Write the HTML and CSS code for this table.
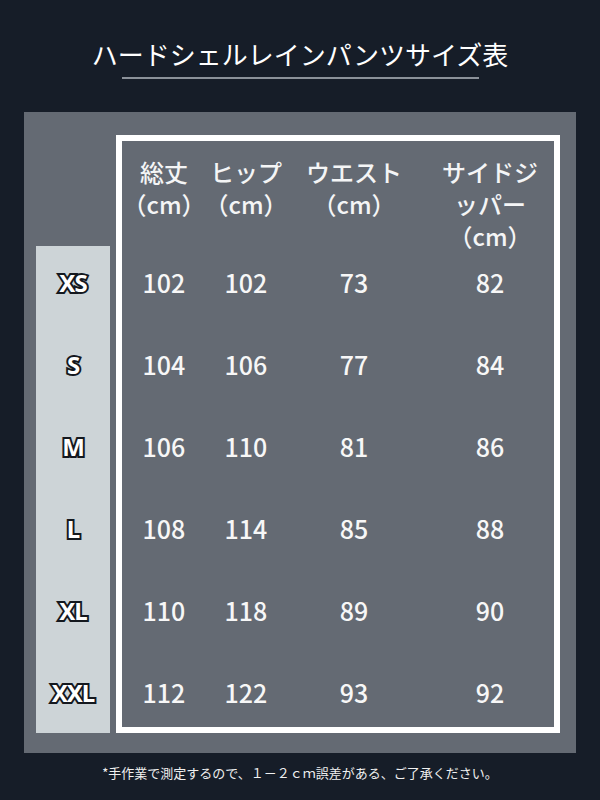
FILE: index.html
```html
<!DOCTYPE html>
<html lang="ja">
<head>
<meta charset="utf-8">
<link rel="stylesheet" href="styles.css">
</head>
<body>
<div class="page">
  <header class="title-wrap">
    <h1 class="title">ハードシェルレインパンツサイズ表</h1>
    <div class="title-line"></div>
  </header>
  <section class="panel">
    <div class="sizes">
      <div class="size">XS</div>
      <div class="size">S</div>
      <div class="size">M</div>
      <div class="size">L</div>
      <div class="size">XL</div>
      <div class="size">XXL</div>
    </div>
    <div class="table">
      <div class="th"><span class="ln">総丈</span><span class="ln">（cm）</span></div>
      <div class="th"><span class="ln">ヒップ</span><span class="ln">（cm）</span></div>
      <div class="th"><span class="ln">ウエスト</span><span class="ln">（cm）</span></div>
      <div class="th last"><span class="ln">サイドジ</span><span class="ln">ッパー</span><span class="ln">（cm）</span></div>

      <div class="td">102</div><div class="td">102</div><div class="td">73</div><div class="td last">82</div>
      <div class="td">104</div><div class="td">106</div><div class="td">77</div><div class="td last">84</div>
      <div class="td">106</div><div class="td">110</div><div class="td">81</div><div class="td last">86</div>
      <div class="td">108</div><div class="td">114</div><div class="td">85</div><div class="td last">88</div>
      <div class="td">110</div><div class="td">118</div><div class="td">89</div><div class="td last">90</div>
      <div class="td">112</div><div class="td">122</div><div class="td">93</div><div class="td last">92</div>
    </div>
  </section>
  <p class="note">*手作業で測定するので、１－２ｃｍ誤差がある、ご了承ください。</p>
</div>
</body>
</html>
```

FILE: styles.css
```css
* { box-sizing: border-box; }
html, body {
  margin: 0;
  padding: 0;
  background: #161d28;
}
body {
  width: 600px;
  height: 800px;
  overflow: hidden;
  font-family: "Noto Sans CJK JP", "Noto Sans", sans-serif;
  color: #ffffff;
}
.page {
  display: flex;
  flex-direction: column;
}
.title-wrap {
  padding-top: 36px;
  display: flex;
  flex-direction: column;
  align-items: center;
}
.title {
  margin: 0;
  font-size: 26px;
  line-height: 36px;
  font-weight: 400;
  color: #ffffff;
}
.title-line {
  width: 357px;
  height: 2px;
  margin-top: 5px;
  background: #8b9199;
}
.panel {
  margin: 33px 24px 0;
  height: 641px;
  background: #646a73;
  padding: 23px 16px 20px 12px;
  display: grid;
  grid-template-columns: 74px 444px;
  column-gap: 6px;
}
.sizes {
  align-self: end;
  height: 487px;
  background: #cdd4d7;
  display: grid;
  grid-template-rows: repeat(6, 82px);
  align-content: end;
}
.size {
  display: flex;
  align-items: center;
  justify-content: center;
  font-family: "Noto Sans", sans-serif;
  font-weight: 700;
  font-size: 24px;
  letter-spacing: -1px;
  color: #ffffff;
  -webkit-text-stroke: 4px #14181e;
  paint-order: stroke fill;
}
.table {
  height: 598px;
  border: 6px solid #ffffff;
  display: grid;
  grid-template-columns: 84px 80px 136px 132px;
  grid-template-rows: 100px repeat(6, 82px);
  align-content: start;
}
.th {
  padding-top: 15px;
  display: flex;
  flex-direction: column;
  align-items: center;
  font-size: 24px;
  font-weight: 500;
  color: #f4f5f6;
  white-space: nowrap;
}
.ln {
  display: block;
  height: 32px;
  line-height: 32px;
}
.td {
  display: flex;
  align-items: center;
  justify-content: center;
  font-size: 25px;
  font-weight: 500;
  color: #f7f7f7;
}
.last {
  padding-left: 4px;
}
.note {
  margin: 10px 0 0;
  text-align: center;
  font-size: 13px;
  line-height: 20px;
  color: #f0f0f0;
}
```
